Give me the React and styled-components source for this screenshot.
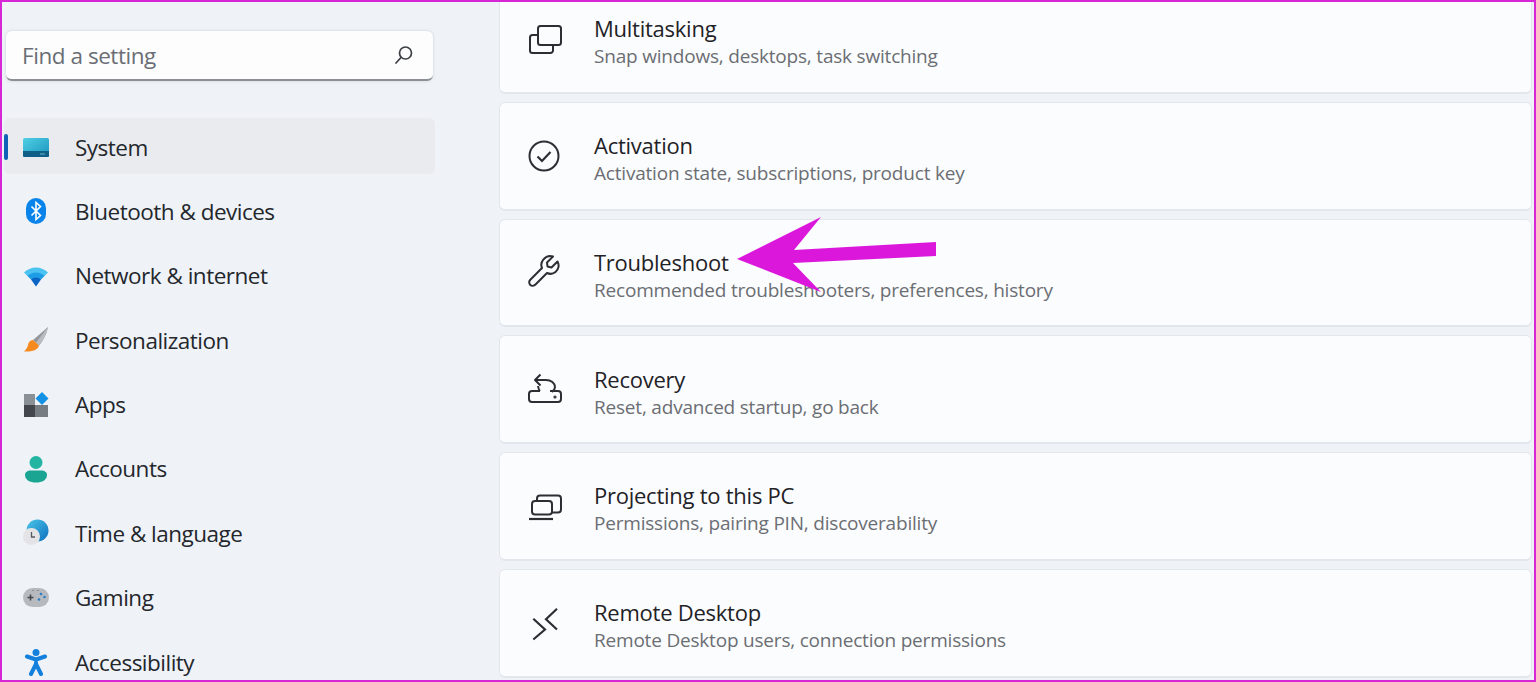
import React from "react";
import styled, { createGlobalStyle } from "styled-components";

const GlobalStyle = createGlobalStyle`
  html, body {
    margin: 0;
    padding: 0;
    overflow: hidden;
    background: #eff3f8;
  }
`;

const SystemIcon = () => (
  <svg width="28" height="28" viewBox="0 0 28 28">
    <defs>
      <linearGradient id="sys" x1="0" y1="0" x2="1" y2="1">
        <stop offset="0" stopColor="#4fd0e4" />
        <stop offset="1" stopColor="#1b93bd" />
      </linearGradient>
    </defs>
    <rect x="1" y="5" width="26" height="19" rx="1.5" fill="url(#sys)" />
    <path d="M1 18h26v4.500a1.500 1.500 0 0 1-1.500 1.500h-23A1.500 1.500 0 0 1 1 22.500z" fill="#0f5f86" />
    <rect x="18" y="20.500" width="5" height="1" fill="#6fb3cc" />
  </svg>
);

const BluetoothIcon = () => (
  <svg width="28" height="28" viewBox="0 0 28 28">
    <rect x="4" y="1" width="20" height="26" rx="10" fill="#0a84ea" />
    <path d="M9.500 9.500l9 9-4.500 4V5.500l4.500 4-9 9" fill="none" stroke="#fff" strokeWidth="1.600" />
  </svg>
);

const WifiIcon = () => (
  <svg width="28" height="28" viewBox="0 0 28 28">
    <path d="M2 10.500C5 7.500 9.300 5.500 14 5.500s9 2 12 5l-3.500 3.500H5.500z" fill="#4cc2f1" />
    <path d="M5.500 14C7.700 11.800 10.700 10.500 14 10.500s6.300 1.300 8.500 3.500L19 17.500H9z" fill="#1e9de6" />
    <path d="M9 17.500c1.300-1.300 3.100-2 5-2s3.700.7 5 2L14 24.500z" fill="#0b63c4" />
  </svg>
);

const BrushIcon = () => (
  <svg width="28" height="28" viewBox="0 0 28 28">
    <path d="M26 1L11 14l6 5.500C21 15 24.500 8 26 1z" fill="#94989e" />
    <path d="M26 1L14 16.800l3 2.700C21 15 24.500 8 26 1z" fill="#b9bcc1" />
    <path d="M11 14c-3 .5-4.500 2-5 5-.4 2.300-1.800 4.500-4 6.500 7 .5 14-1 15-6z" fill="#f58a1f" />
  </svg>
);

const AppsIcon = () => (
  <svg width="28" height="28" viewBox="0 0 28 28">
    <rect x="2" y="3" width="11" height="11" fill="#8b9097" />
    <rect x="2" y="14" width="11" height="12" fill="#43474d" />
    <rect x="13" y="14" width="13" height="12" fill="#777c83" />
    <path d="M20 1l6.500 6.500L20 14l-6.500-6.500z" fill="#1490e4" />
  </svg>
);

const AccountsIcon = () => (
  <svg width="28" height="28" viewBox="0 0 28 28">
    <circle cx="14" cy="7.500" r="6.500" fill="#24b5a2" />
    <path d="M3 20c0-3 2.500-4.500 5.500-4.500h11c3 0 5.500 1.500 5.500 4.500 0 5-5 7.500-11 7.500S3 25 3 20z" fill="#19a592" />
  </svg>
);

const TimeIcon = () => (
  <svg width="28" height="28" viewBox="0 0 28 28">
    <defs>
      <linearGradient id="globe" x1="0" y1="0" x2="1" y2="1">
        <stop offset="0" stopColor="#4cc6e6" />
        <stop offset="1" stopColor="#0c6fc0" />
      </linearGradient>
    </defs>
    <circle cx="15.500" cy="11.500" r="11" fill="url(#globe)" />
    <circle cx="9.500" cy="17.500" r="8.500" fill="#e4e4e6" />
    <path d="M9.500 13v5h3.500" fill="none" stroke="#555a60" strokeWidth="1.300" />
  </svg>
);

const GamingIcon = () => (
  <svg width="28" height="28" viewBox="0 0 28 28">
    <rect x="1" y="4" width="26" height="19" rx="9.500" fill="#b6babf" />
    <path d="M5.500 13.500h6M8.500 10.500v6" stroke="#454950" strokeWidth="1.600" />
    <circle cx="19" cy="10" r="1.300" fill="#2c7fc4" />
    <circle cx="22.500" cy="13" r="1.300" fill="#2c7fc4" />
    <circle cx="17" cy="15.500" r="1.300" fill="#2c7fc4" />
    <path d="M10 6.500h2M15 6.500h2" stroke="#8a8e94" strokeWidth="1" />
  </svg>
);

const AccessibilityIcon = () => (
  <svg width="28" height="28" viewBox="0 0 28 28">
    <circle cx="14" cy="4.500" r="3.500" fill="#1480dc" />
    <path d="M5 8.500L14 11.500l9-3M14 11.500v6M14 16L9 26M14 16L19 26" fill="none" stroke="#1480dc" strokeWidth="4" strokeLinecap="round" strokeLinejoin="round" />
  </svg>
);

const MultitaskingIcon = () => (
  <svg width="36" height="36" viewBox="0 0 36 36" fill="none" stroke="#2b2e33" strokeWidth="2" strokeLinejoin="round">
    <rect x="11" y="5" width="23" height="19" rx="2.500" />
    <path d="M11 14H5.500A2.500 2.500 0 0 0 3 16.500v13A2.500 2.500 0 0 0 5.500 32h18a2.500 2.500 0 0 0 2.500-2.500V24" />
  </svg>
);

const ActivationIcon = () => (
  <svg width="36" height="36" viewBox="0 0 36 36" fill="none" stroke="#2b2e33" strokeWidth="2">
    <circle cx="17" cy="18" r="14.500" />
    <path d="M10.500 18.500l4.500 4.500 8.500-9" strokeWidth="2.200" />
  </svg>
);

const WrenchIcon = () => (
  <svg width="36" height="36" viewBox="0 0 36 36" fill="none" stroke="#2b2e33" strokeWidth="2" strokeLinejoin="round">
    <path d="M26 2.500l-6 6 .5 4 4 1 6-6c2 3.500 1.200 8-2 10.500-2.500 2-5.800 2.300-8.500 1L8.500 30.500c-1.500 1.500-3.800 1.700-5.200.4-1.500-1.400-1.500-3.700 0-5.200L15 14c-1.200-2.800-.7-6 1.300-8.400C18.800 2.600 22.800 1.500 26 2.500z" />
  </svg>
);

const RecoveryIcon = () => (
  <svg width="36" height="36" viewBox="0 0 36 36" fill="none" stroke="#2b2e33" strokeWidth="2" strokeLinejoin="round">
    <path d="M13 20H5a3 3 0 0 0-3 3v5a3 3 0 0 0 3 3h26a3 3 0 0 0 3-3v-5a3 3 0 0 0-3-3h-8" />
    <path d="M8 9h11c5 0 9 3 9 7 0 2-1 3.500-3 5" />
    <path d="M13.500 3.500L8 9l5.500 5.500" />
    <path d="M11 15c.3 2.500 1 4 2 5" />
    <circle cx="28" cy="26" r=".6" fill="#2b2e33" />
  </svg>
);

const ProjectingIcon = () => (
  <svg width="36" height="36" viewBox="0 0 36 36" fill="none" stroke="#2b2e33" strokeWidth="2" strokeLinejoin="round">
    <path d="M10 13v-2.500a3 3 0 0 1 3-3h18a3 3 0 0 1 3 3v11a3 3 0 0 1-3 3h-6" />
    <rect x="5" y="13" width="20" height="13.500" rx="3" />
    <path d="M2 31h24" strokeWidth="2.200" />
  </svg>
);

const RemoteIcon = () => (
  <svg width="36" height="36" viewBox="0 0 36 36" fill="none" stroke="#2b2e33" strokeWidth="2.200">
    <path d="M6.300 13.800L18 24.500 6.300 34.500" />
    <path d="M30 3.800L19 14.200l11 10.300" />
  </svg>
);

const SearchIcon = () => (
  <svg width="20" height="20" viewBox="0 0 20 20" fill="none" stroke="#3b3e43" strokeWidth="1.700">
    <circle cx="11.500" cy="8" r="6" />
    <path d="M7 12.500L2 18" strokeLinecap="round" />
  </svg>
);

const navItems = [
  { label: "System", icon: <SystemIcon />, active: true },
  { label: "Bluetooth & devices", icon: <BluetoothIcon /> },
  { label: "Network & internet", icon: <WifiIcon /> },
  { label: "Personalization", icon: <BrushIcon /> },
  { label: "Apps", icon: <AppsIcon /> },
  { label: "Accounts", icon: <AccountsIcon /> },
  { label: "Time & language", icon: <TimeIcon /> },
  { label: "Gaming", icon: <GamingIcon /> },
  { label: "Accessibility", icon: <AccessibilityIcon /> },
];

const cards = [
  { title: "Multitasking", desc: "Snap windows, desktops, task switching", icon: <MultitaskingIcon /> },
  { title: "Activation", desc: "Activation state, subscriptions, product key", icon: <ActivationIcon /> },
  { title: "Troubleshoot", desc: "Recommended troubleshooters, preferences, history", icon: <WrenchIcon /> },
  { title: "Recovery", desc: "Reset, advanced startup, go back", icon: <RecoveryIcon /> },
  { title: "Projecting to this PC", desc: "Permissions, pairing PIN, discoverability", icon: <ProjectingIcon /> },
  { title: "Remote Desktop", desc: "Remote Desktop users, connection permissions", icon: <RemoteIcon /> },
];

const App = () => {
  return (
    <Frame>
      <GlobalStyle />
      <Sidebar>
        <SearchBox>
          <SearchText>Find a setting</SearchText>
          <SearchIcon />
        </SearchBox>
        <Nav>
          {navItems.map((item) => (
            <NavRow key={item.label} $active={item.active}>
              <NavIcon>{item.icon}</NavIcon>
              <NavLabel>{item.label}</NavLabel>
            </NavRow>
          ))}
        </Nav>
      </Sidebar>
      <Main>
        {cards.map((card) => (
          <Card key={card.title}>
            <CardIcon>{card.icon}</CardIcon>
            <CardText>
              <CardTitle>{card.title}</CardTitle>
              <CardDesc>{card.desc}</CardDesc>
            </CardText>
          </Card>
        ))}
      </Main>
      <Arrow viewBox="0 0 210 80" width="210" height="80">
        <path d="M2 43L86 1L59 34L201 26L201 40L58 47L86 76Z" fill="#dc17dc" />
      </Arrow>
    </Frame>
  );
};

const Frame = styled.div`
  position: relative;
  display: flex;
  box-sizing: border-box;
  width: 1536px;
  height: 682px;
  overflow: hidden;
  border: 2px solid #d626d6;
  background: #eff3f8;
  font-family: "Open Sans", "Noto Sans", "Liberation Sans", sans-serif;
`;

const Sidebar = styled.div`
  display: flex;
  flex-direction: column;
  flex: none;
  width: 497px;
  padding-top: 29px;
  box-sizing: border-box;
`;

const SearchBox = styled.div`
  display: flex;
  align-items: center;
  justify-content: space-between;
  flex: none;
  box-sizing: border-box;
  width: 427px;
  height: 50px;
  margin-left: 4px;
  padding: 0 19px 0 16px;
  background: #fdfdfe;
  border-radius: 6px;
  border-bottom: 2px solid #8c9095;
  box-shadow: 0 0 3px rgba(120, 130, 145, 0.3);
`;

const SearchText = styled.span`
  font-size: 22.5px;
  letter-spacing: -0.45px;
  color: #6a6e74;
`;

const Nav = styled.div`
  display: flex;
  flex-direction: column;
  flex: none;
  gap: 8.4px;
  margin-top: 37px;
`;

const NavRow = styled.div`
  position: relative;
  display: flex;
  align-items: center;
  flex: none;
  box-sizing: border-box;
  width: 431px;
  height: 56px;
  margin-left: 2px;
  padding: 2px 0 0 18px;
  border-radius: 6px;
  background: ${(p) => (p.$active ? "#e9ebef" : "transparent")};

  &::before {
    content: "";
    display: ${(p) => (p.$active ? "block" : "none")};
    position: absolute;
    left: 0;
    top: 16px;
    width: 4px;
    height: 26px;
    border-radius: 2px;
    background: #0f62b8;
  }
`;

const NavIcon = styled.div`
  display: flex;
  flex: none;
  width: 28px;
  height: 28px;
  margin-right: 25px;
`;

const NavLabel = styled.span`
  font-size: 22.5px;
  letter-spacing: -0.5px;
  color: #24272c;
`;

const Main = styled.div`
  display: flex;
  flex-direction: column;
  flex: 1;
  gap: 8px;
  padding-right: 2px;
`;

const Card = styled.div`
  display: flex;
  align-items: center;
  flex: none;
  box-sizing: border-box;
  height: 108.75px;
  padding-left: 27px;
  background: #fbfcfe;
  border: 1px solid #e2e7ee;
  border-bottom-width: 2px;
  border-radius: 6px;

  &:first-child {
    margin-top: -17px;
  }
`;

const CardIcon = styled.div`
  display: flex;
  flex: none;
  width: 36px;
  height: 36px;
  margin-right: 31px;
`;

const CardText = styled.div`
  display: flex;
  flex-direction: column;
  margin-top: 7px;
`;

const CardTitle = styled.div`
  font-size: 22px;
  letter-spacing: -0.25px;
  line-height: 28px;
  color: #1f2226;
`;

const CardDesc = styled.div`
  font-size: 19px;
  letter-spacing: -0.2px;
  line-height: 28px;
  color: #6b6e73;
`;

const Arrow = styled.svg`
  position: absolute;
  left: 733px;
  top: 214px;
`;

export default App;
